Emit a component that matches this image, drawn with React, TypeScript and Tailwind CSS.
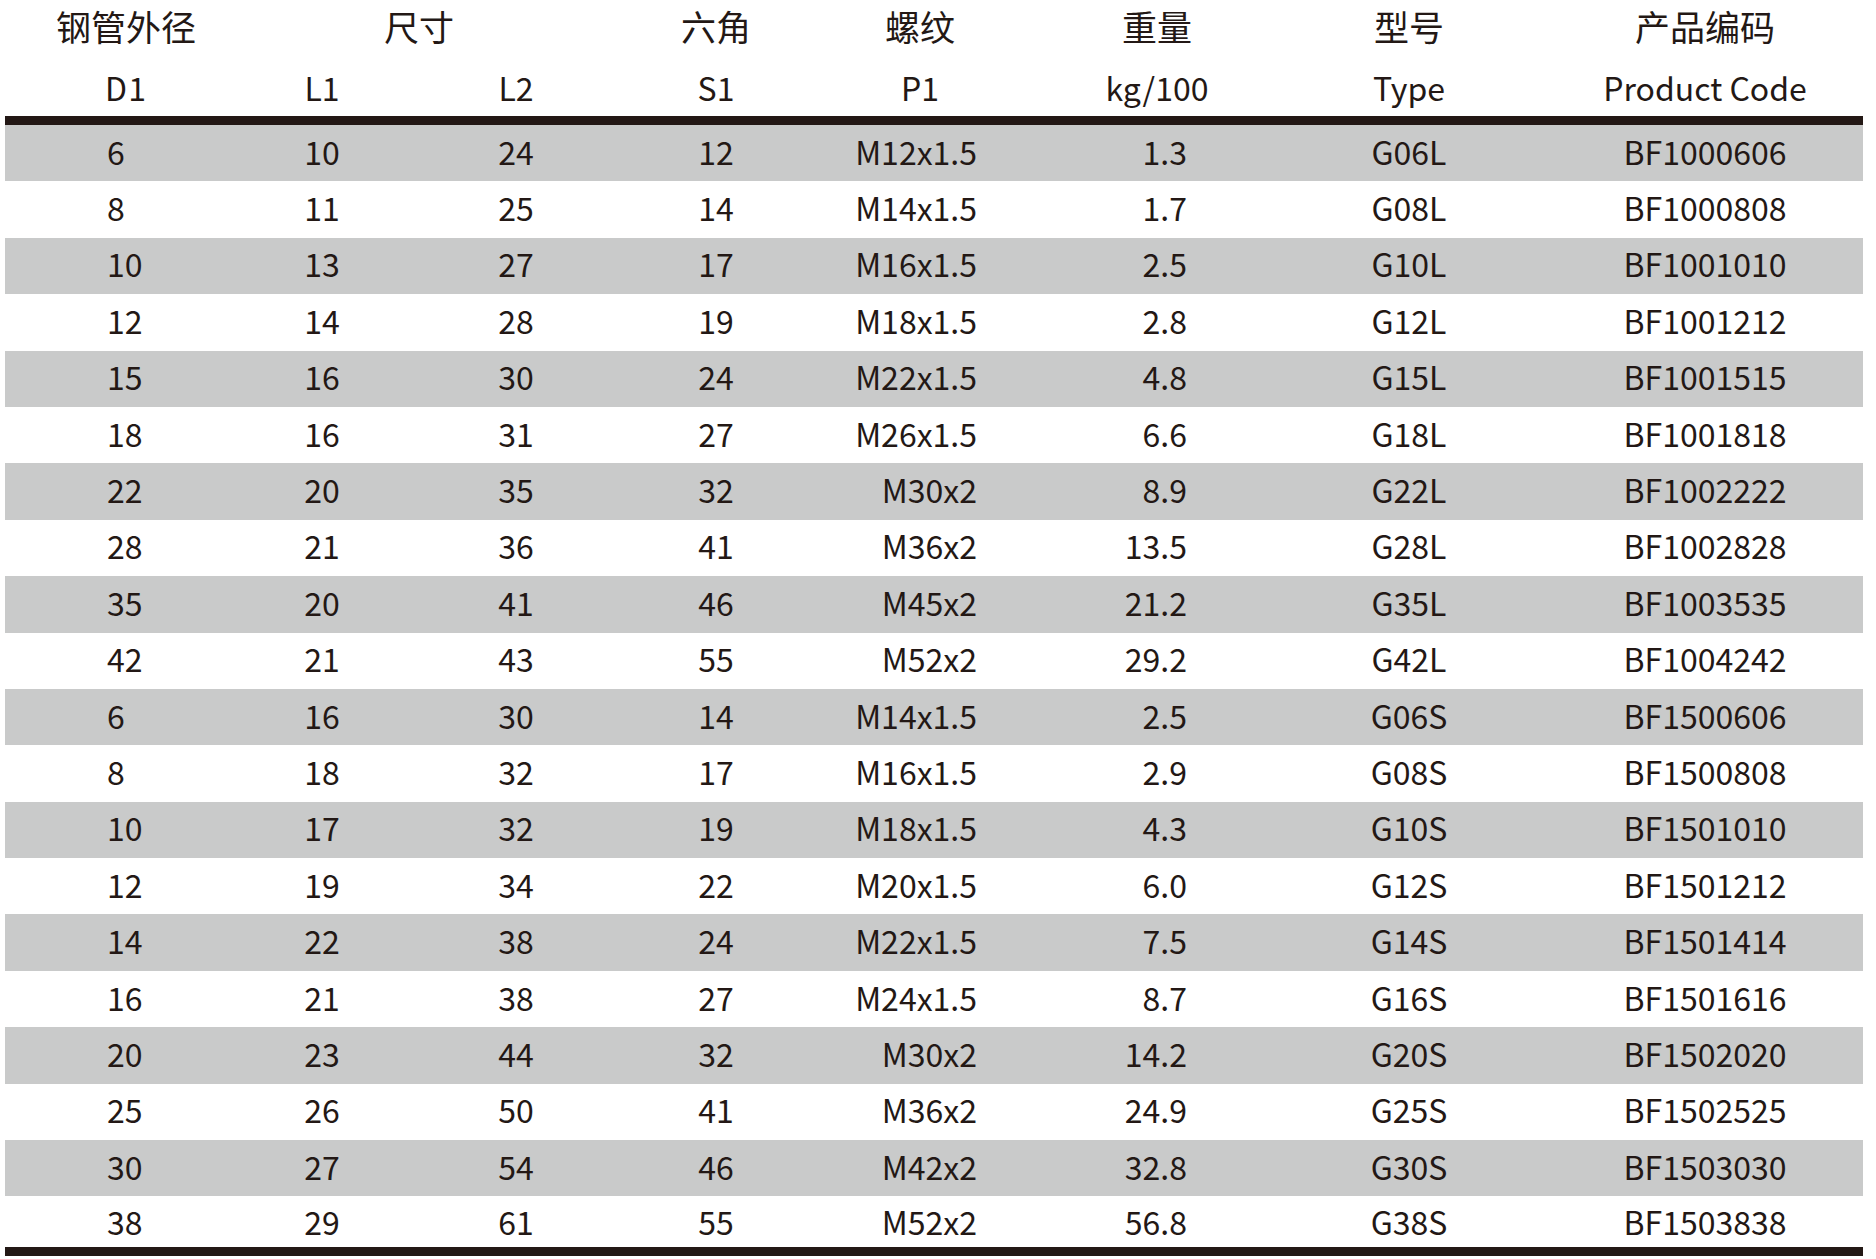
import React from "react";

// Column template shared by every header and data row so values line up.
const COLS = "grid grid-cols-[242px_150px_238px_162px_246px_228px_276px_316px]";

type Row = [string, string, string, string, string, string, string, string];

const ROWS: Row[] = [
  ["6", "10", "24", "12", "M12x1.5", "1.3", "G06L", "BF1000606"],
  ["8", "11", "25", "14", "M14x1.5", "1.7", "G08L", "BF1000808"],
  ["10", "13", "27", "17", "M16x1.5", "2.5", "G10L", "BF1001010"],
  ["12", "14", "28", "19", "M18x1.5", "2.8", "G12L", "BF1001212"],
  ["15", "16", "30", "24", "M22x1.5", "4.8", "G15L", "BF1001515"],
  ["18", "16", "31", "27", "M26x1.5", "6.6", "G18L", "BF1001818"],
  ["22", "20", "35", "32", "M30x2", "8.9", "G22L", "BF1002222"],
  ["28", "21", "36", "41", "M36x2", "13.5", "G28L", "BF1002828"],
  ["35", "20", "41", "46", "M45x2", "21.2", "G35L", "BF1003535"],
  ["42", "21", "43", "55", "M52x2", "29.2", "G42L", "BF1004242"],
  ["6", "16", "30", "14", "M14x1.5", "2.5", "G06S", "BF1500606"],
  ["8", "18", "32", "17", "M16x1.5", "2.9", "G08S", "BF1500808"],
  ["10", "17", "32", "19", "M18x1.5", "4.3", "G10S", "BF1501010"],
  ["12", "19", "34", "22", "M20x1.5", "6.0", "G12S", "BF1501212"],
  ["14", "22", "38", "24", "M22x1.5", "7.5", "G14S", "BF1501414"],
  ["16", "21", "38", "27", "M24x1.5", "8.7", "G16S", "BF1501616"],
  ["20", "23", "44", "32", "M30x2", "14.2", "G20S", "BF1502020"],
  ["25", "26", "50", "41", "M36x2", "24.9", "G25S", "BF1502525"],
  ["30", "27", "54", "46", "M42x2", "32.8", "G30S", "BF1503030"],
  ["38", "29", "61", "55", "M52x2", "56.8", "G38S", "BF1503838"],
];

function DataRow({ row, shaded, last }: { row: Row; shaded: boolean; last: boolean }) {
  const [d1, l1, l2, s1, p1, kg, type, code] = row;
  return (
    <div
      className={`${COLS} items-center text-[32px] leading-none ${
        last ? "h-[51px] pb-[2px]" : "h-[56.4px] pb-[5px]"
      } ${shaded ? "bg-[#c9caca]" : "bg-white"}`}
    >
      <div className="pl-[102px]">{d1}</div>
      <div className="text-center">{l1}</div>
      <div className="text-center">{l2}</div>
      <div className="text-center">{s1}</div>
      <div className="pr-[66px] text-right">{p1}</div>
      <div className="pr-[84px] text-right">{kg}</div>
      <div className="text-center">{type}</div>
      <div className="text-center">{code}</div>
    </div>
  );
}

export default function App() {
  return (
    <div
      className="h-[1259px] w-[1876px] bg-white text-[#231815]"
      style={{ fontFamily: '"Noto Sans CJK SC", "Noto Sans", sans-serif' }}
    >
      <div className="ml-[5px] w-[1858px]">
        {/* Chinese header line */}
        <div className={`${COLS} h-[50px] items-center text-[35px] leading-none`}>
          <div className="text-center">钢管外径</div>
          <div className="col-span-2 pr-[44px] text-center">尺寸</div>
          <div className="text-center">六角</div>
          <div className="text-center">螺纹</div>
          <div className="text-center">重量</div>
          <div className="text-center">型号</div>
          <div className="text-center">产品编码</div>
        </div>

        {/* Symbol / English header line */}
        <div className={`${COLS} h-[66px] items-center pt-[8px] text-[32px] leading-none`}>
          <div className="text-center tracking-[1px]">D1</div>
          <div className="text-center">L1</div>
          <div className="text-center">L2</div>
          <div className="text-center">S1</div>
          <div className="text-center">P1</div>
          <div className="text-center">kg/100</div>
          <div className="text-center">Type</div>
          <div className="text-center">Product Code</div>
        </div>

        <div className="h-[9px] bg-[#231815]" />

        {ROWS.map((row, i) => (
          <DataRow key={i} row={row} shaded={i % 2 === 0} last={i === ROWS.length - 1} />
        ))}

        <div className="h-[9px] bg-[#231815]" />
      </div>
    </div>
  );
}
